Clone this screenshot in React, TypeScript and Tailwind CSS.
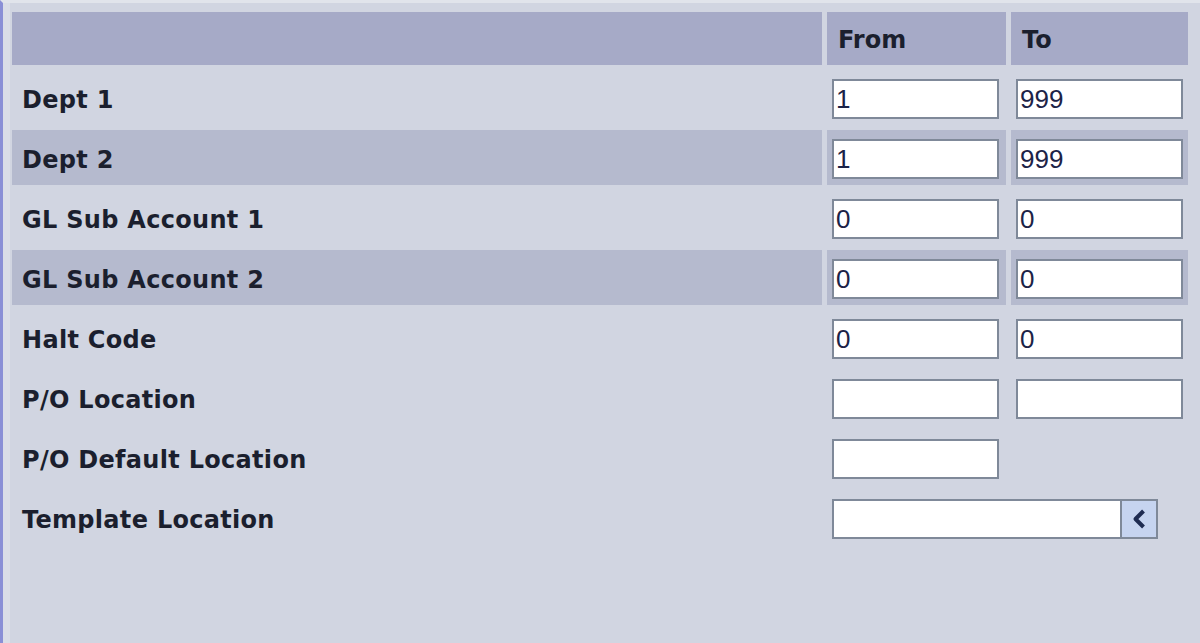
type Row = {
  label: string;
  from?: string;
  to?: string;
  shaded?: boolean;
  kind: 'pair' | 'single' | 'combo';
};

const rows: Row[] = [
  { label: 'Dept 1', from: '1', to: '999', kind: 'pair' },
  { label: 'Dept 2', from: '1', to: '999', shaded: true, kind: 'pair' },
  { label: 'GL Sub Account 1', from: '0', to: '0', kind: 'pair' },
  { label: 'GL Sub Account 2', from: '0', to: '0', shaded: true, kind: 'pair' },
  { label: 'Halt Code', from: '0', to: '0', kind: 'pair' },
  { label: 'P/O Location', from: '', to: '', kind: 'pair' },
  { label: 'P/O Default Location', from: '', kind: 'single' },
  { label: 'Template Location', kind: 'combo' },
];

const Field = ({ value }: { value?: string }) => (
  <input
    readOnly
    value={value ?? ''}
    className="w-[167px] h-[40px] border-2 border-[#7f8999] bg-white px-[2px] pt-[2px] text-[26px] font-normal leading-none text-[#1c2347] font-['Liberation_Sans',Arial,sans-serif] outline-none"
  />
);

const Combo = () => (
  <div className="flex w-[326px] h-[40px] border-2 border-[#7f8999] bg-white">
    <input readOnly value="" className="flex-1 min-w-0 h-full bg-white outline-none" />
    <button className="w-[36px] h-full border-l-2 border-[#7f8999] bg-[#c6d4f0] flex items-center justify-center">
      <svg width="16" height="22" viewBox="0 0 16 22">
        <polyline points="12.5,3 4.5,11 12.5,19" fill="none" stroke="#1f2c52" strokeWidth="4" strokeLinejoin="round" />
      </svg>
    </button>
  </div>
);

export default function App() {
  return (
    <div className="w-[1200px] h-[643px] overflow-hidden bg-[#d1d5e1] border-l-[3px] border-l-[#8a8fd6] border-t-[3px] border-t-[#e1e4eb] font-['DejaVu_Sans',Verdana,sans-serif]">
      <div className="h-full border-l-[7px] border-l-[#dadde7] pl-[2px] pt-[9px]">
        <div className="grid grid-cols-[810px_179px_177px] gap-[5px] text-[24px] font-bold text-[#1b1f2e]">
          <div className="h-[53px] bg-[#a6aac7]" />
          <div className="h-[53px] bg-[#a6aac7] pl-[11px] pt-[2px] flex items-center">From</div>
          <div className="h-[53px] bg-[#a6aac7] pl-[11px] pt-[2px] flex items-center">To</div>

          {rows.map((r) => {
            const bg = r.shaded ? 'bg-[#b5bace]' : '';
            return (
              <div key={r.label} className="contents">
                <div className={`h-[55px] pl-[10px] pt-[4px] flex items-center tracking-[0.3px] ${bg}`}>{r.label}</div>
                {r.kind === 'pair' && (
                  <>
                    <div className={`h-[55px] pl-[5px] pt-[2px] flex items-center ${bg}`}>
                      <Field value={r.from} />
                    </div>
                    <div className={`h-[55px] pl-[5px] pt-[2px] flex items-center ${bg}`}>
                      <Field value={r.to} />
                    </div>
                  </>
                )}
                {r.kind === 'single' && (
                  <>
                    <div className="h-[55px] pl-[5px] pt-[2px] flex items-center">
                      <Field value={r.from} />
                    </div>
                    <div className="h-[55px]" />
                  </>
                )}
                {r.kind === 'combo' && (
                  <div className="col-span-2 h-[55px] pl-[5px] pt-[2px] flex items-center">
                    <Combo />
                  </div>
                )}
              </div>
            );
          })}
        </div>
      </div>
    </div>
  );
}
